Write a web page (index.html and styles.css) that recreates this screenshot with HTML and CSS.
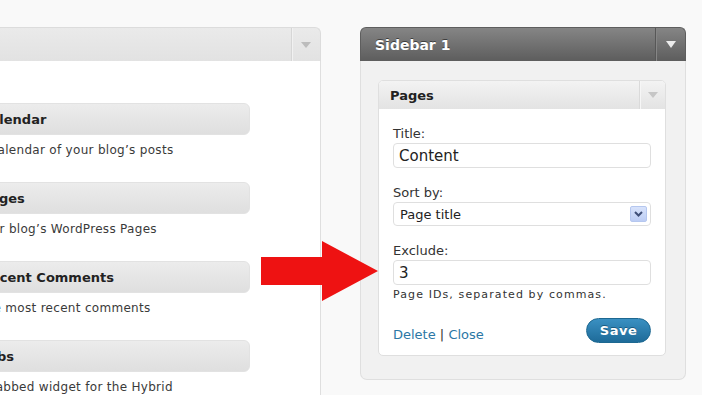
FILE: index.html
```html
<!DOCTYPE html>
<html>
<head>
<meta charset="utf-8">
<link rel="stylesheet" href="styles.css">
</head>
<body>
<div class="stage">
  <section class="panel panel-left">
    <header class="panel-head head-light">
      <span class="head-title"></span>
      <span class="toggle toggle-light"><i class="tri tri-light"></i></span>
    </header>
    <div class="panel-body list-body">
      <div class="item">
        <div class="bar">Calendar</div>
        <p class="desc">A calendar of your blog’s posts</p>
      </div>
      <div class="item">
        <div class="bar">Pages</div>
        <p class="desc">Your blog’s WordPress Pages</p>
      </div>
      <div class="item">
        <div class="bar">Recent Comments</div>
        <p class="desc">The most recent comments</p>
      </div>
      <div class="item">
        <div class="bar">Tabs</div>
        <p class="desc">A tabbed widget for the Hybrid theme</p>
      </div>
    </div>
  </section>

  <section class="panel panel-right">
    <header class="panel-head head-dark">
      <span class="head-title">Sidebar 1</span>
      <span class="toggle toggle-dark"><i class="tri tri-white"></i></span>
    </header>
    <div class="panel-body sidebar-body">
      <div class="widget">
        <header class="widget-head">
          <span class="widget-title">Pages</span>
          <span class="toggle toggle-widget"><i class="tri tri-widget"></i></span>
        </header>
        <div class="widget-body">
          <div class="group">
            <div class="lbl">Title:</div>
            <div class="field">Content</div>
          </div>
          <div class="group">
            <div class="lbl">Sort by:</div>
            <div class="select">
              <span>Page title</span>
              <span class="select-btn">
                <svg width="9" height="6" viewBox="0 0 9 6"><polyline points="1,1 4.5,4.5 8,1" fill="none" stroke="#3f4f78" stroke-width="2"/></svg>
              </span>
            </div>
          </div>
          <div class="group group-last">
            <div class="lbl">Exclude:</div>
            <div class="field">3</div>
            <p class="help">Page IDs, separated by commas.</p>
          </div>
          <div class="actions">
            <div class="links"><a class="link">Delete</a> | <a class="link">Close</a></div>
            <button class="save">Save</button>
          </div>
        </div>
      </div>
    </div>
  </section>

  <svg class="arrow" width="117" height="60" viewBox="0 0 117 60">
    <polygon points="0,16 61,16 61,0 117,30 61,60 61,44 0,44" fill="#ee1212"/>
  </svg>
</div>
</body>
</html>
```

FILE: styles.css
```css
html, body {
  margin: 0;
  padding: 0;
  overflow: hidden;
  background: #f9f9f9;
  font-family: "DejaVu Sans", Verdana, sans-serif;
  color: #333;
}

.stage {
  position: relative;
  display: flex;
  align-items: flex-start;
  gap: 39px;
  padding-top: 27px;
  height: 368px;
}

.panel {
  display: flex;
  flex-direction: column;
  flex: none;
}

.panel-left {
  width: 421px;
  margin-left: -100px;
}

.panel-right {
  width: 326px;
}

.panel-head {
  height: 34px;
  box-sizing: border-box;
  display: flex;
  align-items: stretch;
  border-radius: 6px 6px 0 0;
}

.head-light {
  background: linear-gradient(#eaeaea, #e2e2e2);
  border: 1px solid #dcdcdc;
  border-bottom: none;
}

.head-dark {
  background: linear-gradient(#858585, #5d5d5d);
  border: 1px solid #5e5e5e;
  border-bottom: none;
}

.head-title {
  flex: 1;
  display: flex;
  align-items: center;
  padding-left: 14px;
  font-size: 14px;
  font-weight: bold;
  color: #fff;
  text-shadow: 0 -1px 0 #3f3f3f;
}

.toggle {
  display: flex;
  align-items: center;
  justify-content: center;
}

.toggle-light {
  width: 28px;
  border-left: 1px solid #d6d6d6;
  box-shadow: inset 1px 0 0 #f1f1f1;
}

.toggle-dark {
  width: 29px;
  border-left: 1px solid #575757;
  box-shadow: inset 1px 0 0 #868686;
}

.toggle-widget {
  width: 25px;
  border-left: 1px solid #dadada;
  box-shadow: inset 1px 0 0 #f6f6f6;
}

.tri {
  display: block;
  width: 0;
  height: 0;
  border-left: 5px solid transparent;
  border-right: 5px solid transparent;
}

.tri-light {
  border-top: 6px solid #bcbcbc;
}

.tri-white {
  border-top: 7px solid #ececec;
}

.tri-widget {
  border-top: 6px solid #c6c6c6;
}

.panel-body {
  box-sizing: border-box;
}

.list-body {
  background: #fff;
  border-left: 1px solid #dfdfdf;
  border-right: 1px solid #dfdfdf;
  padding: 42px 70px 0 10px;
  height: 400px;
}

.item {
  margin-bottom: 24px;
}

.bar {
  height: 32px;
  box-sizing: border-box;
  display: flex;
  align-items: center;
  padding-left: 69px;
  background: linear-gradient(#ececec, #dfdfdf);
  border: 1px solid #e2e2e2;
  border-radius: 6px;
  font-size: 13px;
  font-weight: bold;
  color: #222;
}

.desc {
  margin: 7px 0 0;
  padding: 0 55px 0 67px;
  font-size: 12px;
  line-height: 16px;
  letter-spacing: 0.3px;
  color: #3a3a3a;
}

.sidebar-body {
  background: #f1f1f1;
  border: 1px solid #dfdfdf;
  border-top: none;
  border-radius: 0 0 7px 7px;
  padding: 19px 19px 23px 17px;
}

.widget {
  background: #fff;
  border: 1px solid #dfdfdf;
  border-radius: 5px;
  overflow: hidden;
}

.widget-head {
  height: 28px;
  display: flex;
  align-items: stretch;
  background: linear-gradient(#f3f3f3, #e3e3e3);
}

.widget-title {
  flex: 1;
  display: flex;
  align-items: center;
  padding-left: 11px;
  font-size: 13px;
  font-weight: bold;
  color: #222;
}

.widget-body {
  padding: 17px 14px 12px 14px;
}

.group {
  margin-bottom: 17px;
}

.group-last {
  margin-bottom: 16px;
}

.lbl {
  font-size: 13px;
  line-height: 16px;
  color: #333;
  margin-bottom: 1px;
}

.field {
  height: 25px;
  box-sizing: border-box;
  border: 1px solid #dfdfdf;
  border-radius: 4px;
  padding: 1px 5px 0;
  font-size: 15px;
  line-height: 23px;
  color: #222;
  background: #fff;
}

.select {
  height: 24px;
  margin-top: 1px;
  box-sizing: border-box;
  border: 1px solid #dfdfdf;
  border-radius: 4px;
  padding: 0 3px 0 6px;
  display: flex;
  align-items: center;
  justify-content: space-between;
  font-size: 13px;
  color: #222;
  background: #fff;
}

.select-btn {
  width: 17px;
  height: 16px;
  box-sizing: border-box;
  display: flex;
  align-items: center;
  justify-content: center;
  background: linear-gradient(#d8e3fb, #bccdf4);
  border: 1px solid #b5c7ef;
  border-radius: 2px;
}

.help {
  margin: 3px 0 0;
  font-size: 11px;
  line-height: 14px;
  letter-spacing: 1.1px;
  color: #333;
  white-space: nowrap;
}

.actions {
  display: flex;
  justify-content: space-between;
  align-items: flex-end;
}

.links {
  font-size: 13px;
  line-height: 16px;
  color: #333;
}

.link {
  color: #2b77a5;
}

.save {
  width: 65px;
  height: 25px;
  border: 1px solid #1d6891;
  border-radius: 13px;
  background: linear-gradient(#3a90c2, #1e6b99);
  color: #fff;
  font-family: "DejaVu Sans", Verdana, sans-serif;
  font-size: 13px;
  font-weight: bold;
  letter-spacing: 0.5px;
  padding: 0;
  text-shadow: 0 -1px 0 #1a5a80;
}

.arrow {
  position: absolute;
  left: 261px;
  top: 241px;
}
```
